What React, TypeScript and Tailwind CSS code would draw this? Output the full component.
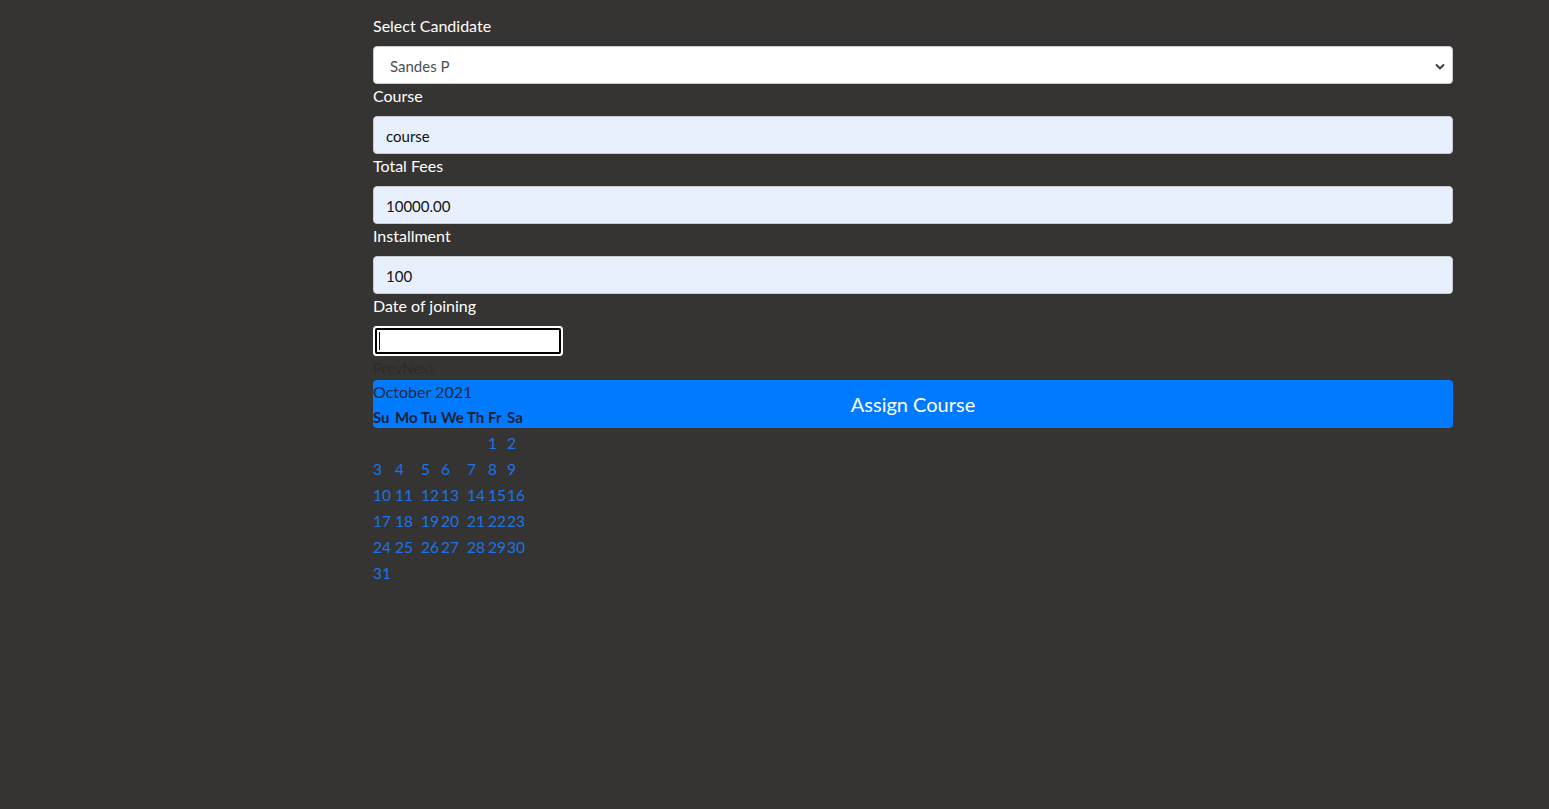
import * as React from 'react';

const colWidths = ['w-[22px]', 'w-[26px]', 'w-[20px]', 'w-[26px]', 'w-[21px]', 'w-[19px]', 'w-[20px]'];
const dayNames = ['Su', 'Mo', 'Tu', 'We', 'Th', 'Fr', 'Sa'];

const weeks: (number | null)[][] = [
  [null, null, null, null, null, 1, 2],
  [3, 4, 5, 6, 7, 8, 9],
  [10, 11, 12, 13, 14, 15, 16],
  [17, 18, 19, 20, 21, 22, 23],
  [24, 25, 26, 27, 28, 29, 30],
  [31, null, null, null, null, null, null],
];

const Field = ({ label, value }: { label: string; value: string }) => (
  <div>
    <label className="block text-[16px] leading-6 text-white mb-2">{label}</label>
    <div className="h-[38px] rounded border border-[#c8ccd0] bg-[#e8f0fe] px-3 pt-[2px] flex items-center text-[15px] text-[#111]">
      {value}
    </div>
  </div>
);

const Calendar = () => (
  <div className="absolute left-0 top-[356px] z-10 text-[15px]">
    <div className="h-6 leading-6 text-[#2c2b29]">PrevNext</div>
    <div className="h-6 leading-6 text-[16px] text-[#1f2a3a]">October 2021</div>
    <div className="flex h-[26px] items-center font-bold text-[#1a2233]">
      {dayNames.map((d, i) => (
        <div key={d} className={colWidths[i]}>{d}</div>
      ))}
    </div>
    {weeks.map((w, wi) => (
      <div key={wi} className="flex h-[26px] items-center pt-[1px] text-[15.5px] text-[#1a73e8]">
        {w.map((d, i) => (
          <div key={i} className={colWidths[i]}>{d ?? ''}</div>
        ))}
      </div>
    ))}
  </div>
);

export default function App() {
  return (
    <div className="min-h-[809px] bg-[#363432] font-['Lato','Open_Sans',sans-serif]">
      <div className="relative ml-[373px] w-[1080px] pt-[14px]">
        {/* Candidate */}
        <div>
          <label className="block text-[16px] leading-6 text-white mb-2">Select Candidate</label>
          <div className="h-[38px] rounded border border-[#c8ccd0] bg-white pl-4 pr-[7px] pt-[2px] flex items-center justify-between text-[15px] text-[#495057]">
            <span>Sandes P</span>
            <svg width="10" height="7" viewBox="0 0 10 7" fill="none">
              <path d="M1 1.5 L5 5.5 L9 1.5" stroke="#333" strokeWidth="1.8" />
            </svg>
          </div>
        </div>
        <Field label="Course" value="course" />
        <Field label="Total Fees" value="10000.00" />
        <Field label="Installment" value="100" />

        {/* Date of joining */}
        <div>
          <label className="block text-[16px] leading-6 text-white mb-2">Date of joining</label>
          <div className="h-[30px] w-[190px] rounded-[3px] bg-white border border-white p-px">
            <div className="h-full w-full rounded-[2px] border-2 border-black bg-white flex items-center pl-[2px]">
              <div className="h-[18px] w-px bg-black" />
            </div>
          </div>
        </div>

        <Calendar />

        <button className="mt-6 h-12 w-full rounded bg-[#007bff] text-[20px] text-white">
          Assign Course
        </button>
      </div>
    </div>
  );
}
